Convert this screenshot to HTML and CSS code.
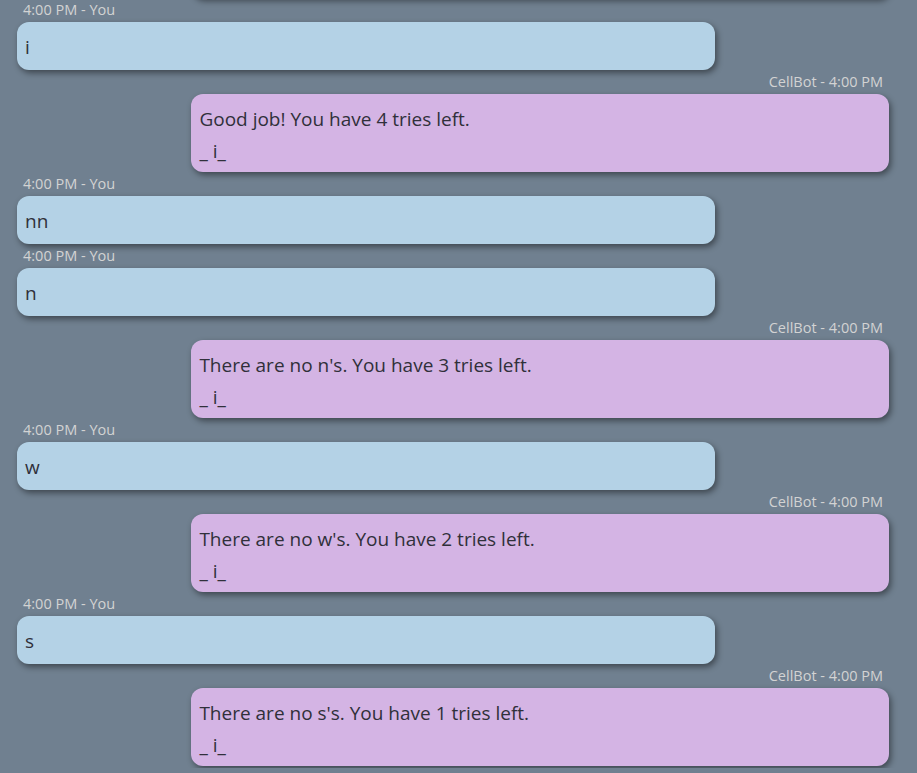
FILE: index.html
```html
<!DOCTYPE html>
<html lang="en">
<head>
<meta charset="utf-8">
<title>CellBot chat</title>
<link rel="stylesheet" href="styles.css">
</head>
<body>
<main class="chat">
  <div class="msg bot">
    <div class="meta">CellBot - 4:00 PM</div>
    <div class="bubble"><div>Good job! You have 5 tries left.</div><div class="board">_ _ _</div></div>
  </div>
  <div class="msg user">
    <div class="meta">4:00 PM - You</div>
    <div class="bubble">i</div>
  </div>
  <div class="msg bot">
    <div class="meta">CellBot - 4:00 PM</div>
    <div class="bubble"><div>Good job! You have 4 tries left.</div><div class="board">_ i_</div></div>
  </div>
  <div class="msg user">
    <div class="meta">4:00 PM - You</div>
    <div class="bubble">nn</div>
  </div>
  <div class="msg user">
    <div class="meta">4:00 PM - You</div>
    <div class="bubble">n</div>
  </div>
  <div class="msg bot">
    <div class="meta">CellBot - 4:00 PM</div>
    <div class="bubble"><div>There are no n's. You have 3 tries left.</div><div class="board">_ i_</div></div>
  </div>
  <div class="msg user">
    <div class="meta">4:00 PM - You</div>
    <div class="bubble">w</div>
  </div>
  <div class="msg bot">
    <div class="meta">CellBot - 4:00 PM</div>
    <div class="bubble"><div>There are no w's. You have 2 tries left.</div><div class="board">_ i_</div></div>
  </div>
  <div class="msg user">
    <div class="meta">4:00 PM - You</div>
    <div class="bubble">s</div>
  </div>
  <div class="msg bot">
    <div class="meta">CellBot - 4:00 PM</div>
    <div class="bubble"><div>There are no s's. You have 1 tries left.</div><div class="board">_ i_</div></div>
  </div>
</main>
</body>
</html>
```
FILE: styles.css
```css
html, body {
  margin: 0;
  padding: 0;
  background: #708090;
  overflow: hidden;
}

body {
  font-family: "Open Sans", "Noto Sans", sans-serif;
  color: #30303a;
}

.chat {
  display: flex;
  flex-direction: column;
  margin: -102px 28px 0 17px;
}

.msg {
  display: flex;
  flex-direction: column;
  margin-bottom: 2px;
}

.msg.user {
  align-items: flex-start;
}

.msg.bot {
  align-items: flex-end;
}

.meta {
  font-size: 14.5px;
  line-height: 20px;
  color: #d3d3d3;
  padding: 0 6px;
  margin-bottom: 2px;
}

.bubble {
  box-sizing: border-box;
  width: 80%;
  font-size: 19px;
  line-height: 30px;
  padding: 10px 8px 8px;
  border-radius: 12px;
  box-shadow: 2px 3px 6px rgba(0, 0, 0, 0.45);
}

.user .bubble {
  background: #b4d2e6;
}

.bot .bubble {
  background: #d4b4e4;
  padding-bottom: 6px;
}

.board {
  margin-top: 2px;
}
```
